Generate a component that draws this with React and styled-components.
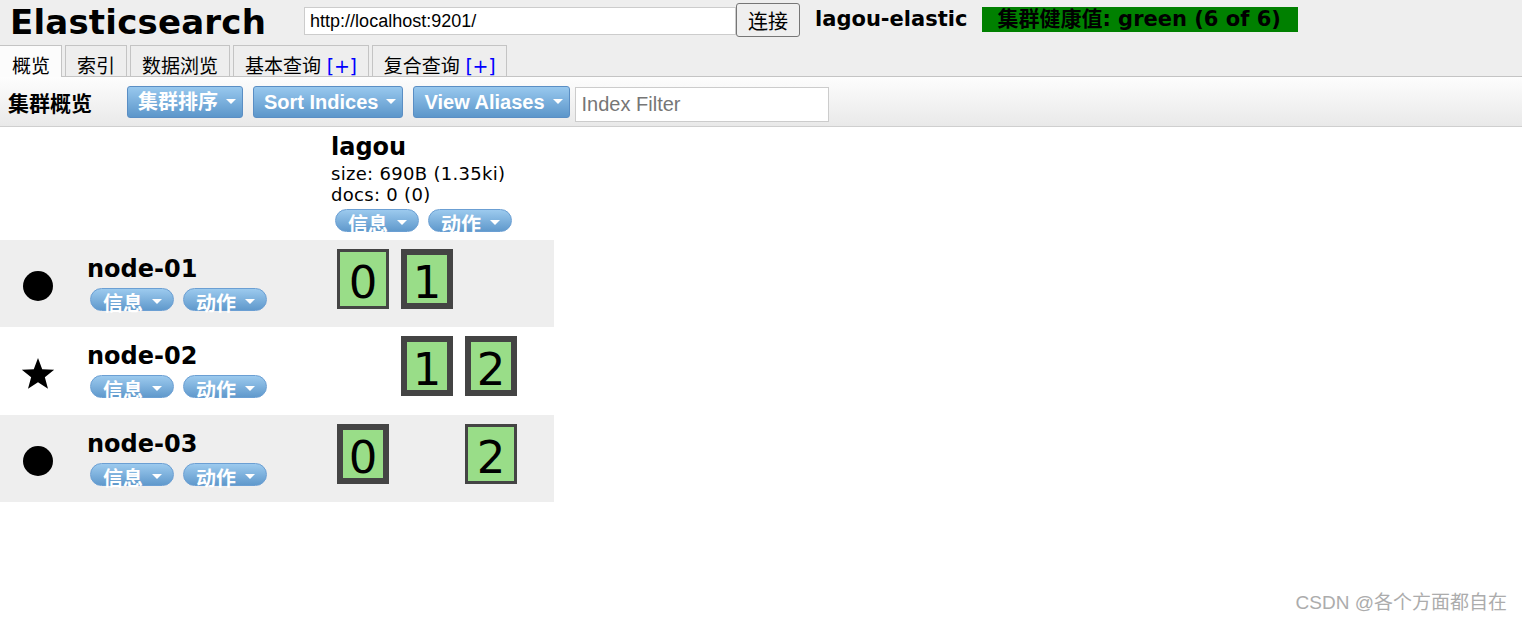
import styled, { createGlobalStyle } from "styled-components";

const GlobalStyle = createGlobalStyle`
  body {
    margin: 0;
    background: #fff;
    font-family: "DejaVu Sans", "Noto Sans CJK SC", sans-serif;
    color: #000;
  }
`;

const verdana = `"DejaVu Sans", "Noto Sans CJK SC", sans-serif`;
const arial = `"Liberation Sans", "Noto Sans CJK SC", sans-serif`;

const Page = styled.div`
  position: relative;
  min-height: 618px;
`;

const Header = styled.div`
  background: #eeeeee;
`;

const TopRow = styled.div`
  display: flex;
  align-items: flex-start;
  height: 45px;
`;

const Title = styled.h1`
  margin: 0 38px 0 10px;
  font-family: ${verdana};
  font-size: 34px;
  font-weight: bold;
  line-height: 45px;
  letter-spacing: 0.2px;
`;

const UrlInput = styled.input`
  box-sizing: border-box;
  width: 432px;
  height: 28px;
  margin-top: 7px;
  padding: 0 5px;
  border: 1px solid #cccccc;
  background: #fff;
  font-family: ${arial};
  font-size: 18px;
  color: #000;
  outline: none;
`;

const ConnectButton = styled.button`
  box-sizing: border-box;
  height: 34px;
  width: 64px;
  margin-top: 3px;
  padding: 0;
  border: 1px solid #767676;
  border-radius: 3px;
  background: #efefef;
  font-family: ${arial};
  font-size: 20px;
  color: #000;
`;

const ClusterName = styled.span`
  margin: 7px 0 0 15px;
  font-family: ${verdana};
  font-size: 21px;
  font-weight: bold;
  line-height: 25px;
`;

const Health = styled.span`
  box-sizing: border-box;
  width: 316px;
  height: 25px;
  margin: 7px 0 0 15px;
  padding-left: 15px;
  background: #008000;
  font-family: ${verdana};
  font-size: 21px;
  font-weight: bold;
  line-height: 25px;
  white-space: nowrap;
  overflow: hidden;
`;

const TabBar = styled.div`
  display: flex;
  align-items: flex-end;
  gap: 3px;
  height: 32px;
  box-sizing: border-box;
  border-bottom: 1px solid #c4c4c4;
`;

const Tab = styled.div`
  box-sizing: border-box;
  height: ${p => (p.$active ? "32px" : "31px")};
  margin-bottom: ${p => (p.$active ? "-1px" : "0")};
  padding: 7px 11px 0 ${p => (p.$active ? "12px" : "11px")};
  border: 1px solid #c4c4c4;
  border-bottom: none;
  border-left: ${p => (p.$active ? "none" : "1px solid #c4c4c4")};
  background: ${p => (p.$active ? "#fcfcfc" : "#eeeeee")};
  font-family: "Noto Sans CJK SC", sans-serif;
  font-size: 19px;
  line-height: 23px;
  white-space: nowrap;
`;

const Plus = styled.span`
  font-family: ${verdana};
  color: #0000ff;
  letter-spacing: -0.3px;
`;

const Toolbar = styled.div`
  display: flex;
  align-items: center;
  height: 49px;
  padding-left: 8px;
  border-bottom: 1px solid #cfcfcf;
  background: linear-gradient(to bottom, #fdfdfd, #e9e9e9);
`;

const ToolbarTitle = styled.span`
  margin-right: 35px;
  font-family: ${verdana};
  font-size: 21px;
  font-weight: bold;
`;

const MenuButton = styled.button`
  display: inline-flex;
  align-items: center;
  box-sizing: border-box;
  height: 32px;
  margin-right: ${p => p.$gap || 10}px;
  padding: 0 6px 0 10px;
  border: 1px solid #5a8ec4;
  border-radius: 3px;
  background: linear-gradient(to bottom, #98c8ee, #5c96ca);
  color: #fff;
  font-family: ${arial};
  font-size: 20px;
  font-weight: bold;
  line-height: 32px;
  white-space: nowrap;
`;

const Caret = styled.span`
  display: inline-block;
  width: 0;
  height: 0;
  margin-left: ${p => p.$gap || 8}px;
  margin-top: ${p => p.$top || 0}px;
  border-left: 5px solid transparent;
  border-right: 5px solid transparent;
  border-top: 5px solid #fff;
`;

const FilterInput = styled.input`
  box-sizing: border-box;
  width: 254px;
  height: 35px;
  margin-top: 6px;
  padding: 0 6px;
  border: 1px solid #cccccc;
  background: #fff;
  font-family: ${arial};
  font-size: 20px;
  outline: none;
  &::placeholder {
    color: #767676;
  }
`;

const Overview = styled.div`
  width: 554px;
`;

const Row = styled.div`
  display: grid;
  grid-template-columns: 80px 251px 223px;
  height: ${p => p.$height || "auto"};
  background: ${p => (p.$shade ? "#eeeeee" : "transparent")};
`;

const IndexCell = styled.div`
  grid-column: 3;
  padding: 4px 0 8px 0;
`;

const IndexName = styled.div`
  font-family: ${verdana};
  font-size: 24px;
  font-weight: bold;
  line-height: 32px;
`;

const IndexStat = styled.div`
  font-family: ${verdana};
  font-size: 18px;
  line-height: 21px;
  letter-spacing: 0.3px;
`;

const PillGroup = styled.div`
  display: flex;
  gap: 9px;
  margin: ${p => p.$margin || "4px 0 0 4px"};
`;

const Pill = styled.span`
  display: inline-flex;
  align-items: flex-start;
  box-sizing: border-box;
  height: 23px;
  padding: 0 11px 0 12px;
  border: 1px solid #6b9fd3;
  border-radius: 12px;
  background: linear-gradient(to bottom, #9ccaee, #6099cc);
  color: #fff;
  font-family: "Noto Sans CJK SC", sans-serif;
  font-size: 20px;
  font-weight: bold;
  line-height: 27px;
  white-space: nowrap;
`;

const IconCell = styled.div`
  display: flex;
  align-items: center;
  padding: 5px 0 0 21px;
`;

const NameCell = styled.div`
  padding: 15px 0 0 7px;
`;

const NodeName = styled.div`
  font-family: ${verdana};
  font-size: 24px;
  font-weight: bold;
  line-height: 28px;
`;

const ShardCell = styled.div`
  display: flex;
  gap: 12px;
  padding: 9px 0 0 6px;
`;

const Shard = styled.div`
  box-sizing: border-box;
  width: 52px;
  height: 60px;
  padding-top: 7px;
  border: ${p => (p.$primary ? 6 : 3)}px solid #444444;
  background: #99dd88;
  font-family: ${verdana};
  font-size: 45px;
  line-height: ${p => 60 - 7 - (p.$primary ? 12 : 6)}px;
  text-align: center;
  visibility: ${p => (p.$empty ? "hidden" : "visible")};
`;

const Watermark = styled.div`
  position: absolute;
  right: 15px;
  top: 587px;
  font-family: ${arial};
  font-size: 19px;
  color: #acacac;
  white-space: nowrap;
`;

const NodeIcon = ({ kind }) => (
  <svg width="34" height="34" viewBox="0 0 34 34">
    {kind === "star" ? (
      <polygon
        points="17,1 21.23,12.18 33.17,12.75 23.85,20.22 27,31.75 17,25.2 7,31.75 10.15,20.22 0.83,12.75 12.77,12.18"
        fill="#000"
      />
    ) : (
      <circle cx="17" cy="17" r="15" fill="#000" />
    )}
  </svg>
);

const NodeButtons = ({ margin }) => (
  <PillGroup $margin={margin}>
    <Pill>信息<Caret $gap={9} $top={10} /></Pill>
    <Pill>动作<Caret $gap={9} $top={10} /></Pill>
  </PillGroup>
);

const nodes = [
  { name: "node-01", icon: "circle", shade: true, height: "87px", shards: [{ n: 0 }, { n: 1, p: true }, null] },
  { name: "node-02", icon: "star", shade: false, height: "88px", shards: [null, { n: 1, p: true }, { n: 2, p: true }] },
  { name: "node-03", icon: "circle", shade: true, height: "87px", shards: [{ n: 0, p: true }, null, { n: 2 }] },
];

const tabs = [
  { label: "概览", active: true },
  { label: "索引" },
  { label: "数据浏览" },
  { label: "基本查询", plus: true },
  { label: "复合查询", plus: true },
];

export default function App() {
  return (
    <Page>
      <GlobalStyle />
      <Header>
        <TopRow>
          <Title>Elasticsearch</Title>
          <UrlInput defaultValue="http://localhost:9201/" />
          <ConnectButton>连接</ConnectButton>
          <ClusterName>lagou-elastic</ClusterName>
          <Health>集群健康值: green (6 of 6)</Health>
        </TopRow>
        <TabBar>
          {tabs.map(t => (
            <Tab key={t.label} $active={t.active}>
              {t.label}
              {t.plus && <Plus> [+]</Plus>}
            </Tab>
          ))}
        </TabBar>
      </Header>

      <Toolbar>
        <ToolbarTitle>集群概览</ToolbarTitle>
        <MenuButton>集群排序<Caret /></MenuButton>
        <MenuButton>Sort Indices<Caret /></MenuButton>
        <MenuButton $gap={5}>View Aliases<Caret /></MenuButton>
        <FilterInput placeholder="Index Filter" />
      </Toolbar>

      <Overview>
        <Row>
          <IndexCell>
            <IndexName>lagou</IndexName>
            <IndexStat>size: 690B (1.35ki)</IndexStat>
            <IndexStat>docs: 0 (0)</IndexStat>
            <NodeButtons />
          </IndexCell>
        </Row>
        {nodes.map(node => (
          <Row key={node.name} $shade={node.shade} $height={node.height}>
            <IconCell>
              <NodeIcon kind={node.icon} />
            </IconCell>
            <NameCell>
              <NodeName>{node.name}</NodeName>
              <NodeButtons margin="5px 0 0 3px" />
            </NameCell>
            <ShardCell>
              {node.shards.map((s, i) => (
                <Shard key={i} $primary={s?.p} $empty={!s}>
                  {s ? s.n : ""}
                </Shard>
              ))}
            </ShardCell>
          </Row>
        ))}
      </Overview>

      <Watermark>CSDN @各个方面都自在</Watermark>
    </Page>
  );
}
